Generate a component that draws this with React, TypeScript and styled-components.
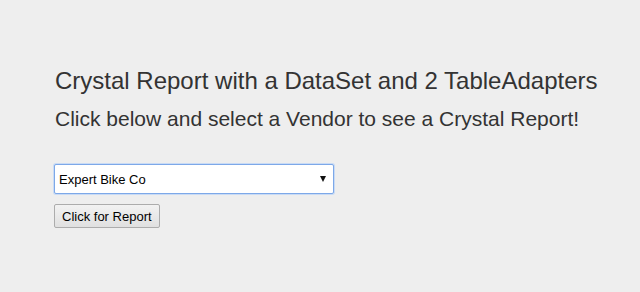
import styled, { createGlobalStyle } from 'styled-components';

const GlobalStyle = createGlobalStyle`
  html, body {
    margin: 0;
    padding: 0;
    background-color: #eeeeee;
  }
  body {
    font-family: "Liberation Sans", Arial, sans-serif;
    color: #333333;
  }
`;

const Page = styled.div`
  width: 640px;
  height: 292px;
  padding: 66px 0 0 54px;
  box-sizing: border-box;
`;

const Title = styled.h2`
  margin: 0 0 0 1px;
  font-size: 24px;
  font-weight: 400;
  line-height: 30px;
`;

const SubTitle = styled.h3`
  margin: 10px 0 0 1px;
  font-size: 21px;
  font-weight: 400;
  line-height: 26px;
`;

const Form = styled.div`
  display: flex;
  flex-direction: column;
  align-items: flex-start;
  gap: 10px;
  margin-top: 32px;
`;

const SelectBox = styled.div`
  position: relative;
  width: 280px;
  height: 30px;
  box-sizing: border-box;
  border: 1px solid #7da8e8;
  box-shadow: 0 0 0 1px #c9dbf5;
  border-radius: 2px;
  background: #ffffff;
  display: flex;
  align-items: center;
  justify-content: space-between;
  padding: 0 6px 0 4px;
  font-size: 13px;
  color: #000000;
`;

const Arrow = styled.span`
  width: 0;
  height: 0;
  border-left: 3.5px solid transparent;
  border-right: 3.5px solid transparent;
  border-top: 6px solid #111111;
  margin-right: 1px;
`;

const Button = styled.button`
  height: 24px;
  padding: 0 7px;
  font-family: "Liberation Sans", Arial, sans-serif;
  font-size: 13px;
  color: #000000;
  border: 1px solid #acacac;
  border-radius: 2px;
  background: linear-gradient(#f2f2f2, #e0e0e0);
`;

const App = () => {
  return (
    <>
      <GlobalStyle />
      <Page>
        <Title>Crystal Report with a DataSet and 2 TableAdapters</Title>
        <SubTitle>Click below and select a Vendor to see a Crystal Report!</SubTitle>
        <Form>
          <SelectBox>
            <span>Expert Bike Co</span>
            <Arrow />
          </SelectBox>
          <Button>Click for Report</Button>
        </Form>
      </Page>
    </>
  );
};

export default App;
